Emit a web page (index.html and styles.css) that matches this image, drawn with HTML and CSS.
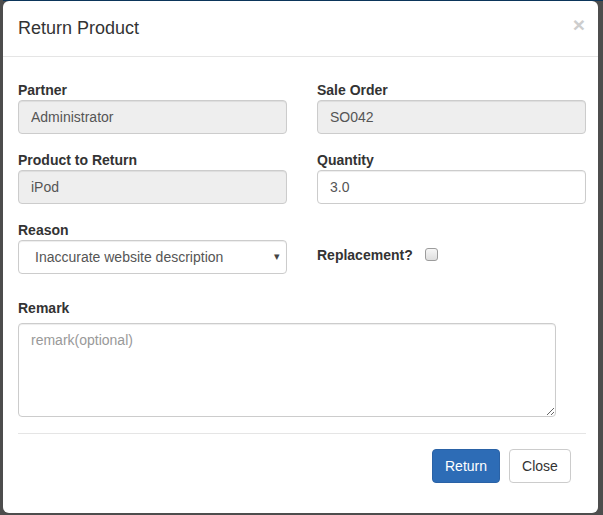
FILE: index.html
```html
<!DOCTYPE html>
<html>
<head>
<meta charset="utf-8">
<title>Return Product</title>
<link rel="stylesheet" href="styles.css">
</head>
<body>
<div class="backdrop-top"></div>
<div class="modal">
  <div class="modal-header">
    <h4 class="modal-title">Return Product</h4>
    <span class="close">×</span>
  </div>
  <div class="modal-body">
    <div class="grid">
      <div class="form-group">
        <label class="lbl">Partner</label>
        <input class="form-control" type="text" value="Administrator" disabled>
      </div>
      <div class="form-group">
        <label class="lbl">Sale Order</label>
        <input class="form-control" type="text" value="SO042" disabled>
      </div>
      <div class="form-group">
        <label class="lbl">Product to Return</label>
        <input class="form-control" type="text" value="iPod" disabled>
      </div>
      <div class="form-group">
        <label class="lbl">Quantity</label>
        <input class="form-control" type="text" value="3.0">
      </div>
      <div class="form-group">
        <label class="lbl">Reason</label>
        <div class="select-wrap">
          <select class="form-control select">
            <option>Inaccurate website description</option>
          </select>
          <span class="caret">▾</span>
        </div>
      </div>
      <div class="form-group check-group">
        <label class="lbl inline">Replacement?</label>
        <input class="check" type="checkbox">
      </div>
    </div>
    <div class="remark">
      <label class="lbl lbl-remark">Remark</label>
      <textarea class="form-control textarea" placeholder="remark(optional)"></textarea>
    </div>
  </div>
  <div class="modal-footer">
    <button class="btn btn-primary">Return</button>
    <button class="btn btn-default">Close</button>
  </div>
</div>
</body>
</html>
```

FILE: styles.css
```css
html, body {
  margin: 0;
  padding: 0;
}
body {
  background: #4d4d4d;
  font-family: "Liberation Sans", Arial, sans-serif;
  font-size: 14px;
  color: #333;
  width: 603px;
  height: 515px;
  overflow: hidden;
}
.backdrop-top {
  height: 1px;
  margin-left: 3px;
  background: #0b355a;
}
.modal {
  position: relative;
  margin-left: 3px;
  width: 595px;
  height: 512px;
  background: #fff;
  border-radius: 6px;
  box-sizing: border-box;
}
.modal-header {
  position: relative;
  padding: 15px;
  border-bottom: 1px solid #e5e5e5;
  box-sizing: content-box;
  height: 25px;
}
.modal-title {
  margin: 0;
  font-size: 18px;
  font-weight: normal;
  line-height: 25px;
  color: #333;
}
.close {
  position: absolute;
  right: 13px;
  top: 13px;
  font-size: 21px;
  font-weight: bold;
  line-height: 21px;
  color: #cdcdcd;
}
.modal-body {
  padding: 23px 0 0 15px;
}
.grid {
  display: grid;
  grid-template-columns: 269px 269px;
  column-gap: 30px;
  row-gap: 16px;
}
.lbl {
  display: block;
  font-weight: bold;
  line-height: 20px;
  margin: 0;
  color: #333;
}
.lbl.inline {
  display: inline-block;
}
.lbl-remark {
  margin-bottom: 5px;
}
.form-control {
  display: block;
  width: 100%;
  height: 34px;
  box-sizing: border-box;
  padding: 6px 12px;
  font-family: "Liberation Sans", Arial, sans-serif;
  font-size: 14px;
  line-height: 20px;
  color: #555;
  background: #fff;
  border: 1px solid #ccc;
  border-radius: 4px;
  box-shadow: inset 0 1px 1px rgba(0,0,0,.075);
  margin: 0;
}
.form-control:disabled {
  background: #eee;
  color: #555;
  -webkit-text-fill-color: #555;
  opacity: 1;
}
.select-wrap {
  position: relative;
}
.select {
  -webkit-appearance: none;
  appearance: none;
  padding-left: 16px;
  color: #555;
}
.caret {
  position: absolute;
  right: 7px;
  top: 9px;
  font-size: 11px;
  line-height: 14px;
  color: #444;
  pointer-events: none;
}
.check-group {
  display: flex;
  align-items: flex-start;
  padding-top: 25px;
}
.check {
  -webkit-appearance: none;
  appearance: none;
  width: 13px;
  height: 13px;
  margin: 3px 0 0 12px;
  border: 1px solid #9c9c9c;
  border-radius: 3px;
  background: linear-gradient(#f6f6f6, #dedede);
  box-sizing: border-box;
}
.remark {
  margin-top: 24px;
}
.textarea {
  width: 538px;
  height: 94px;
  resize: vertical;
  color: #555;
}
.textarea::placeholder {
  color: #999;
}
.modal-footer {
  margin: 16px 12px 0 15px;
  border-top: 1px solid #e5e5e5;
  padding: 15px;
  display: flex;
  justify-content: flex-end;
  gap: 9px;
}
.btn {
  height: 34px;
  padding: 6px 12px;
  font-family: "Liberation Sans", Arial, sans-serif;
  font-size: 14px;
  line-height: 20px;
  border-radius: 4px;
  border: 1px solid transparent;
  box-sizing: border-box;
}
.btn-primary {
  background: #2d6cb6;
  border-color: #2a62a6;
  color: #fff;
  width: 68px;
}
.btn-default {
  background: #fff;
  border-color: #ccc;
  color: #333;
  width: 62px;
}
```
